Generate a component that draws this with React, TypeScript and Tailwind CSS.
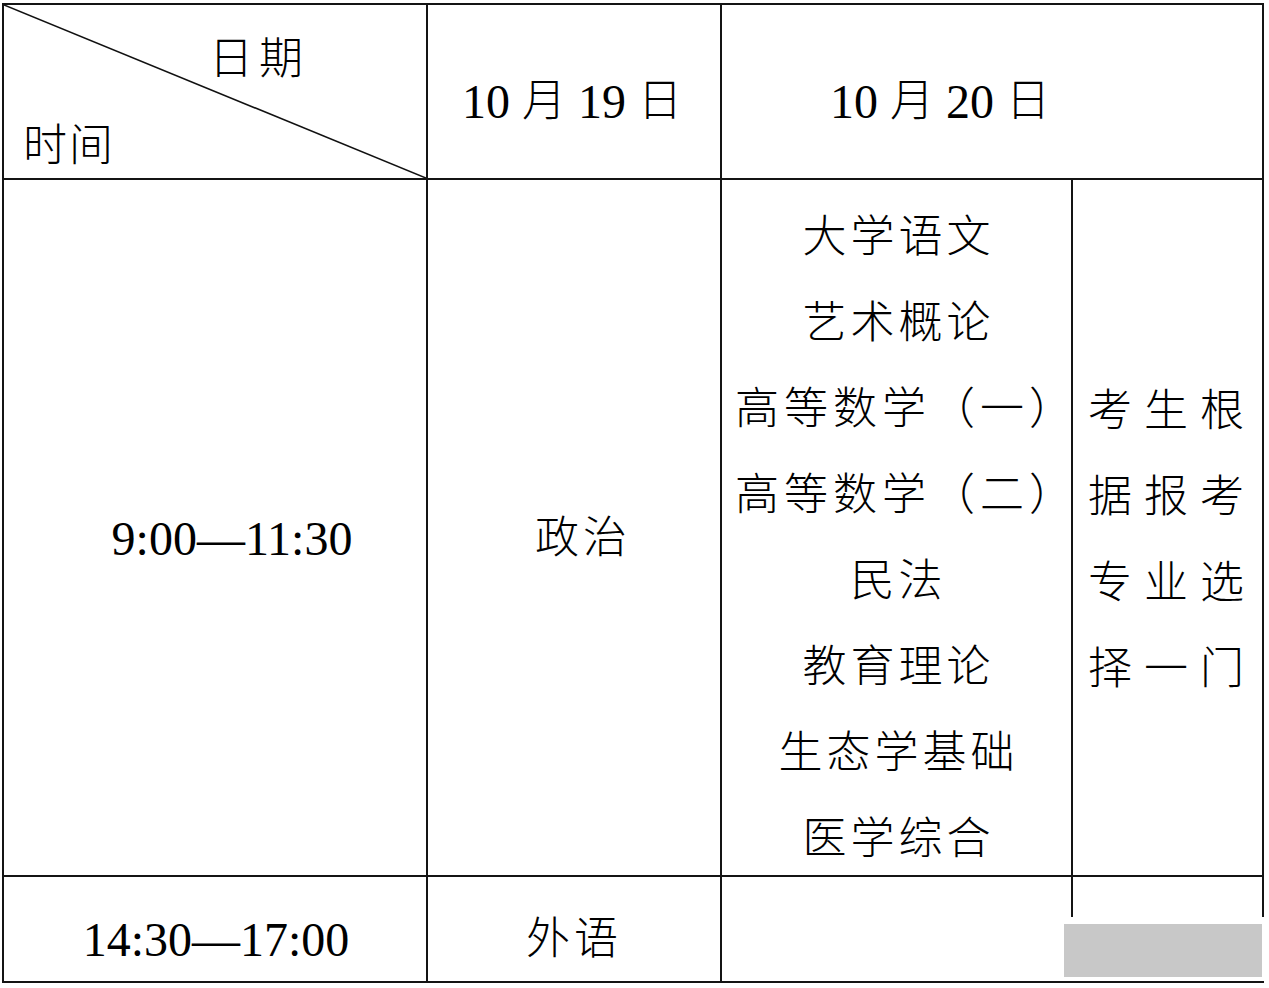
const subjects = [
  '大学语文',
  '艺术概论',
  '高等数学（一）',
  '高等数学（二）',
  '民法',
  '教育理论',
  '生态学基础',
  '医学综合',
];

const note = ['考生根', '据报考', '专业选', '择一门'];

function Num({ children }: { children: React.ReactNode }) {
  return <span className="text-[48px] font-normal">{children}</span>;
}

function Cn({ children, className = '' }: { children: React.ReactNode; className?: string }) {
  return <span className={'text-[44px] font-light ' + className}>{children}</span>;
}

export default function App() {
  return (
    <div className="relative w-[1269px] h-[988px] bg-white overflow-hidden font-['Liberation_Serif','Noto_Sans_CJK_SC',serif] text-black">
      <div className="ml-[2px] mt-[3px] w-[1262px] grid grid-cols-[422px_292px_349px_189px] grid-rows-[173px_695px_104px] gap-[2px] p-[2px] bg-[#141414]">
        {/* header row */}
        <div className="relative bg-white flex flex-col justify-between">
          <svg className="absolute inset-0 w-full h-full" viewBox="0 0 422 173" preserveAspectRatio="none">
            <line x1="0" y1="0" x2="422" y2="173" stroke="#111" strokeWidth="1.6" />
          </svg>
          <div className="pl-[205px] pt-[33px] leading-[44px] tracking-[6px]">
            <Cn>日期</Cn>
          </div>
          <div className="pl-[19px] pb-[0px] leading-[44px] tracking-[2px]">
            <Cn>时间</Cn>
          </div>
        </div>
        <div className="bg-white flex items-center justify-center pt-[20px] pr-[4px] leading-[48px] whitespace-pre">
          <Num>10 </Num>
          <Cn>月</Cn>
          <Num> 19 </Num>
          <Cn>日</Cn>
        </div>
        <div className="col-span-2 bg-white flex items-center justify-center pt-[20px] pr-[104px] leading-[48px] whitespace-pre">
          <Num>10 </Num>
          <Cn>月</Cn>
          <Num> 20 </Num>
          <Cn>日</Cn>
        </div>

        {/* morning row */}
        <div className="bg-white flex items-center justify-center pt-[22px] pl-[34px] leading-[48px]">
          <Num>9:00—11:30</Num>
        </div>
        <div className="bg-white flex items-center justify-center pt-[22px] pl-[18px] leading-[44px] tracking-[4px]">
          <Cn>政治</Cn>
        </div>
        <div className="bg-white flex flex-col items-center pt-[36px] gap-[42px] leading-[44px] tracking-[4px] whitespace-nowrap">
          {subjects.map((s) => (
            <Cn key={s} className={s.includes('（') ? 'pl-[20px] tracking-[5px]' : 'pl-[4px]'}>
              {s}
            </Cn>
          ))}
        </div>
        <div className="bg-white flex flex-col justify-center pt-[27px] pl-[15px] gap-[42px] leading-[44px] tracking-[12px]">
          {note.map((s) => (
            <Cn key={s}>{s}</Cn>
          ))}
        </div>

        {/* afternoon row */}
        <div className="bg-white flex items-center justify-center pt-[22px] pl-[2px] leading-[48px]">
          <Num>14:30—17:00</Num>
        </div>
        <div className="bg-white flex items-center justify-center pt-[22px] tracking-[4px] leading-[44px]">
          <Cn>外语</Cn>
        </div>
        <div className="bg-white" />
        <div className="bg-white" />
      </div>

      {/* watermark patch */}
      <div className="absolute left-[1060px] top-[917px] w-[209px] h-[64px] bg-white">
        <div className="ml-[4px] mt-[7px] w-[198px] h-[53px] bg-[#c8c8c8]" />
      </div>
    </div>
  );
}
